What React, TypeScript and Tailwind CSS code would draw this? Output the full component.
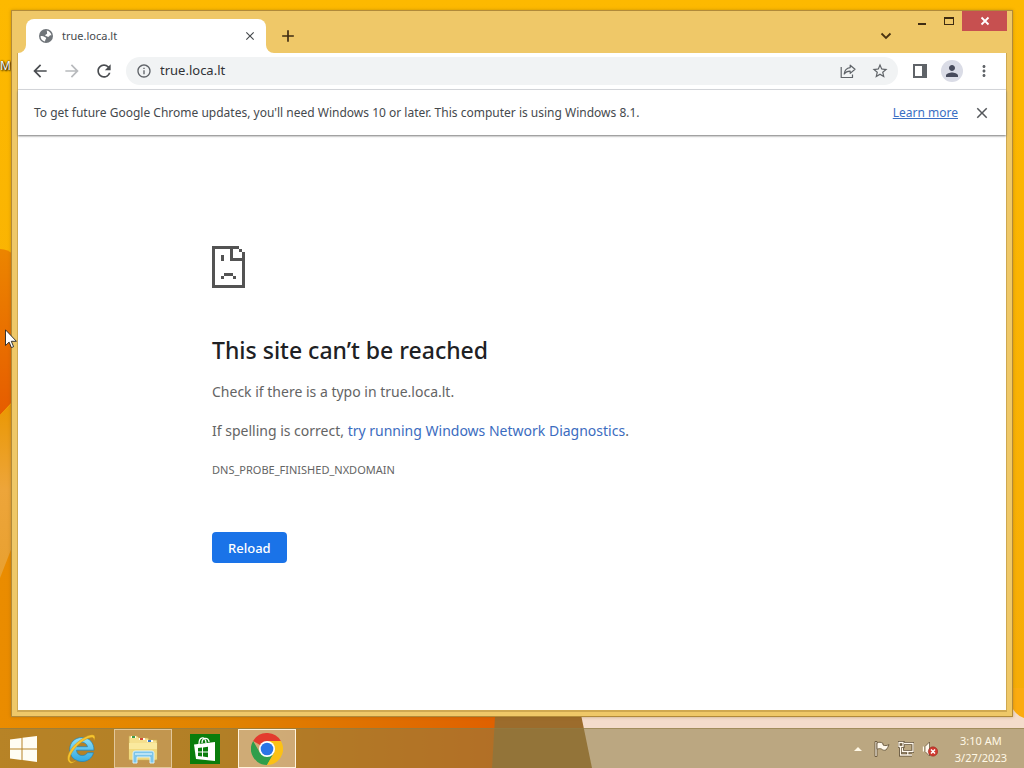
import React from 'react';
import {
  MdAdd,
  MdArrowBack,
  MdArrowForward,
  MdClose,
  MdInfoOutline,
  MdMoreVert,
  MdPerson,
  MdRefresh,
  MdStarOutline,
} from 'react-icons/md';

const Wallpaper: React.FC = () => (
  <svg
    className="absolute inset-0 h-full w-full"
    viewBox="0 0 1024 768"
    preserveAspectRatio="none"
    aria-hidden="true"
  >
    <defs>
      <linearGradient id="sky" x1="0" y1="0" x2="0" y2="1">
        <stop offset="0" stopColor="#fdb900" />
        <stop offset="1" stopColor="#f5ab08" />
      </linearGradient>
      <linearGradient id="petal" x1="0" y1="0" x2="0" y2="1">
        <stop offset="0" stopColor="#ec8500" />
        <stop offset="1" stopColor="#e65c00" />
      </linearGradient>
      <linearGradient id="lower" x1="0" y1="0" x2="0" y2="1">
        <stop offset="0" stopColor="#ea9700" />
        <stop offset="0.5" stopColor="#eda53a" />
        <stop offset="1" stopColor="#e8a030" />
      </linearGradient>
      <linearGradient id="floor" x1="0" y1="0" x2="1" y2="0">
        <stop offset="0" stopColor="#ea8c00" />
        <stop offset="0.45" stopColor="#e08300" />
        <stop offset="0.75" stopColor="#e07000" />
        <stop offset="1" stopColor="#e06000" />
      </linearGradient>
    </defs>
    <rect width="1024" height="768" fill="url(#sky)" />
    <path d="M0 249q8 0 14 6v145L0 415z" fill="url(#petal)" />
    <path d="M0 415l14-14v150L0 578z" fill="url(#lower)" />
    <path d="M0 578l14-36v160h486v66H0z" fill="url(#floor)" />
    <path d="M496 700h83l14 68H492z" fill="#9c6c2c" />
    <path d="M578 700h446v68H592z" fill="#f4dccb" />
    <path d="M1010 688h14v30q-8-2-14-14z" fill="#fbab10" />
  </svg>
);

const GlobeIcon: React.FC = () => (
  <svg className="size-4 shrink-0" viewBox="0 0 16 16" aria-hidden="true">
    <circle cx="8" cy="8" r="7" fill="#70757a" />
    <path
      d="M8.6 2.500C11.200 2.900 13.200 4.900 13.500 7.600c-.9-.5-2-.2-2.300.6-.3.900-1.500.8-2.100.2-.5-.5-1.500-.1-1.700-.9-.2-.9.8-1.200 1.400-1.600.8-.5-.1-1.300.2-2 .1-.4-.3-.9-.4-1.400z"
      fill="#fff"
    />
    <path
      d="M2.500 8.200c1.300-.5 2.900-.3 3.700.6.5.6 1.600.5 1.900 1.200.3.8-.7 1.200-.8 2 0 .5-.3 1-.4 1.400-2.500-.4-4.400-2.600-4.400-5.200z"
      fill="#fff"
    />
  </svg>
);

const TabFoot: React.FC<{ flip?: boolean }> = ({ flip }) => (
  <svg className="size-2 shrink-0" viewBox="0 0 8 8" aria-hidden="true">
    <path d={flip ? 'M0 0a8 8 0 0 0 8 8H0z' : 'M8 0a8 8 0 0 1-8 8h8z'} fill="#fff" />
  </svg>
);

const TitleBar: React.FC = () => (
  <div className="flex h-[42px] items-end">
    <TabFoot />
    <div className="flex h-[34px] w-60 items-center rounded-t-lg bg-white pl-3 pr-2 text-[#45494d]">
      <GlobeIcon />
      <span className="ml-2 flex-1 text-[11px]">true.loca.lt</span>
      <button type="button" aria-label="Close tab" className="flex size-4 items-center justify-center">
        <MdClose className="size-3.5" />
      </button>
    </div>
    <TabFoot flip />
    <button
      type="button"
      aria-label="New tab"
      className="mb-[3px] flex size-7 items-center justify-center text-[#3f2c12]"
    >
      <MdAdd className="size-5" />
    </button>
    <div className="-mr-px ml-auto flex self-start">
      <button
        type="button"
        aria-label="Search tabs"
        className="mr-2 mt-[11px] flex size-7 items-center justify-center"
      >
        <svg className="h-2 w-3" viewBox="0 0 12 8" fill="none" stroke="#4a3310" strokeWidth="1.800">
          <path d="M1.500 1.500L6 6l4.500-4.500" />
        </svg>
      </button>
      <button type="button" aria-label="Minimize" className="flex h-5 w-[27px] items-center justify-center">
        <svg className="size-3" viewBox="0 0 12 12" fill="#3f2c12">
          <path d="M2 8h8v2H2z" />
        </svg>
      </button>
      <button type="button" aria-label="Maximize" className="flex h-5 w-[27px] items-center justify-center">
        <svg className="size-3" viewBox="0 0 12 12" fill="#3f2c12">
          <path fillRule="evenodd" d="M1 2h10v8H1zM2 4v5h8V4z" />
        </svg>
      </button>
      <button
        type="button"
        aria-label="Close"
        className="flex h-5 w-[45px] items-center justify-center bg-[#c75050]"
      >
        <svg className="size-3" viewBox="0 0 12 12" fill="none" stroke="#fff" strokeWidth="1.800">
          <path d="M2.500 2.500l7 7M9.500 2.500l-7 7" />
        </svg>
      </button>
    </div>
  </div>
);

const iconButton = 'flex size-8 shrink-0 items-center justify-center';

const Toolbar: React.FC = () => (
  <div className="flex h-[37px] items-center border-b border-[#dadce0] px-1.5 text-[#5f6368]">
    <button type="button" aria-label="Back" className={iconButton}>
      <MdArrowBack className="size-5 text-[#4a4d51]" />
    </button>
    <button type="button" aria-label="Forward" className={iconButton}>
      <MdArrowForward className="size-5 text-[#b8babd]" />
    </button>
    <button type="button" aria-label="Reload page" className={iconButton}>
      <MdRefresh className="size-5 text-[#4a4d51]" />
    </button>
    <div className="ml-1.5 flex h-7 flex-1 items-center rounded-full bg-[#f1f3f4] pl-2.5 pr-0.5">
      <MdInfoOutline className="size-4 shrink-0" />
      <input
        aria-label="Address"
        defaultValue="true.loca.lt"
        className="ml-2 min-w-0 flex-1 bg-transparent text-[13px] text-[#303236] outline-none"
      />
      <button type="button" aria-label="Share" className={iconButton}>
        <svg
          className="size-4"
          viewBox="0 0 16 16"
          fill="none"
          stroke="currentColor"
          strokeWidth="1.200"
          strokeLinejoin="round"
        >
          <path d="M1.200 4v10.500h11.300v-3" />
          <path d="M10.200 2.200l4.800 4.100-4.800 4.100V8.200C7.600 8.100 5.700 8.900 4.200 11c.3-3.300 2.300-5.900 6-6.400z" />
        </svg>
      </button>
      <button type="button" aria-label="Bookmark" className={iconButton}>
        <MdStarOutline className="size-[18px]" />
      </button>
    </div>
    <button type="button" aria-label="Side panel" className={`ml-1.5 ${iconButton}`}>
      <svg className="size-4" viewBox="0 0 16 16" fill="currentColor">
        <path fillRule="evenodd" d="M1 1h14v14H1zM3 3v10h7V3z" />
      </svg>
    </button>
    <button type="button" aria-label="Profile" className={iconButton}>
      <span className="flex size-[22px] items-center justify-center rounded-full bg-[#dadce6]">
        <MdPerson className="size-[18px] text-[#474b5c]" />
      </span>
    </button>
    <button type="button" aria-label="Menu" className={iconButton}>
      <MdMoreVert className="size-[18px]" />
    </button>
  </div>
);

const InfoBar: React.FC = () => (
  <div className="flex h-[45px] items-center pl-4 pr-2 text-[12px] text-[#45494d] shadow-[0_1px_2px_#777]">
    <p className="flex-1">
      To get future Google Chrome updates, you'll need Windows 10 or later. This computer is using Windows 8.1.
    </p>
    <a href="#learn" className="text-[#3a6fc4] underline">
      Learn more
    </a>
    <button type="button" aria-label="Dismiss" className={`ml-2 ${iconButton}`}>
      <MdClose className="size-[18px] text-[#55585c]" />
    </button>
  </div>
);

const SadPage: React.FC = () => (
  <svg className="h-[42px] w-[33px]" viewBox="0 0 11 14" fill="#535353" shapeRendering="crispEdges">
    <path d="M0 0h9v1H7v3h3V2h1v12H0zM1 1v12h9V5H6V1z" fillRule="evenodd" />
    <path d="M9 1h1v1H9zM3 3h1v2H3zM4 9h3v1H4zM3 10h1v1H3zM7 10h1v1H7z" />
  </svg>
);

const ErrorPage: React.FC = () => (
  <main className="flex-1 px-6 pt-[111px]">
    <div className="mx-auto max-w-[600px] text-[14px] leading-5 text-[#646464]">
      <SadPage />
      <h1 className="mt-12 text-[23px] font-medium leading-7 text-[#202124]">This site can’t be reached</h1>
      <p className="mt-[18px]">Check if there is a typo in true.loca.lt.</p>
      <p className="mt-[19px]">
        If spelling is correct,{' '}
        <a href="#diagnostics" className="text-[#3b6cc0]">
          try running Windows Network Diagnostics
        </a>
        .
      </p>
      <p className="mt-[19px] text-[11px]">DNS_PROBE_FINISHED_NXDOMAIN</p>
      <button
        type="button"
        className="mt-[52px] h-[31px] rounded bg-[#1a73e8] px-4 text-[13px] font-medium text-white"
      >
        Reload
      </button>
    </div>
  </main>
);

const WindowsLogo: React.FC = () => (
  <svg className="h-[26px] w-7" viewBox="0 0 28 26" fill="#fffdf4">
    <path d="M0 3.500L11.500 2v10.500H0zM12.500 1.800L27 0v12.500H12.500zM0 13.500h11.500V24L0 22.500zM12.500 13.500H27V26l-14.500-1.900z" />
  </svg>
);

const ExplorerE: React.FC = () => (
  <svg className="size-8" viewBox="0 0 32 32">
    <defs>
      <linearGradient id="ie" x1="0" y1="0" x2="0" y2="1">
        <stop offset="0" stopColor="#8fe0fa" />
        <stop offset="1" stopColor="#31a8e0" />
      </linearGradient>
    </defs>
    <path
      d="M17 4.500c7.500 0 12 5.300 12 12.700H11.500c.3 3.300 2.600 5.300 5.800 5.300 2.400 0 4-1 5.200-2.800h6C27 25.200 22.800 28.500 17 28.500c-7.200 0-12.300-5-12.300-12S9.800 4.500 17 4.500zm-5.200 9.200h10.700c-.6-2.700-2.600-4.300-5.300-4.300s-4.700 1.600-5.400 4.300z"
      fill="url(#ie)"
      stroke="#2383b5"
      strokeWidth=".7"
      fillRule="evenodd"
    />
    <path
      d="M5 30c-6-4 0-15 8.500-21.500C20 3.200 27.500 0 29.500 2.800c.9 1.300.4 3.200-.5 5 .1-2-.4-3.200-1.900-3.300-3-.2-7.300 2-12.200 6C8 16.200 2.500 25.500 5.600 28.200c1.300 1.100 3.800.2 6-1C8.800 29.600 6.700 30.900 5 30z"
      fill="#f7c52e"
      stroke="#b98518"
      strokeWidth=".4"
    />
  </svg>
);

const FolderIcon: React.FC = () => (
  <svg className="size-8" viewBox="0 0 32 32">
    <path d="M2 3h8l2 2h9l1 2h8v20H2z" fill="#f5df8d" stroke="#c8aa50" strokeWidth=".7" />
    <path d="M4 3h5v2H4zM12 5h6v2h-6zM20 7h6v2h-6z" fill="#fffdf0" />
    <path d="M5 3h3v2H5z" fill="#3d9b46" />
    <path d="M13 5h3v2h-3z" fill="#d44c36" />
    <path d="M21 7h3v2h-3z" fill="#3d79bf" />
    <path d="M2 10h28v16H2z" fill="#fae99e" />
    <path d="M2 16h28v10H2z" fill="#f1d97d" />
    <path
      d="M6 20q0-2 2-2h17q2 0 2 2v10h-4v-6H10v6H6z"
      fill="#7cc5ea"
      stroke="#d5f0fb"
      strokeWidth="1"
    />
    <path d="M8 20h17v2H8z" fill="#b9e3f6" />
  </svg>
);

const StoreIcon: React.FC = () => (
  <svg className="size-[30px]" viewBox="0 0 30 30">
    <path d="M0 0h30v30H0z" fill="#0a7d0c" />
    <path d="M9 10C9 2 16 2 16 9M12 9c0-6 7-6 7-1" fill="none" stroke="#fff" strokeWidth="1.300" />
    <path d="M4 10.500L25 8v19L6 25z" fill="#fff" />
    <path d="M8 14l4-.5v4H8zM13 13.400l5-.6v4.700h-5zM8 18.500h4v4L8 22zM13 18.500h5v4.700l-5-.6z" fill="#0a7d0c" />
  </svg>
);

const ChromeIcon: React.FC = () => (
  <svg className="size-8" viewBox="0 0 48 48">
    <path d="M24 24L3.200 12A24 24 0 0 1 44.800 12H24z" fill="#e33b2e" />
    <path d="M24 24l10.400 6L24 48A24 24 0 0 1 3.200 12l10.400 18z" fill="#2f9e4b" />
    <path d="M24 12h20.800A24 24 0 0 1 24 48l10.400-18z" fill="#fbc116" />
    <circle cx="24" cy="24" r="12" fill="#fff" />
    <circle cx="24" cy="24" r="9.500" fill="#2a75e6" />
  </svg>
);

const taskButton = 'flex w-[58px] items-center justify-center border';

const Taskbar: React.FC = () => (
  <footer className="relative flex h-10 items-stretch border-t border-[#8f7b45]/60 bg-[#8c7c46]/55">
    <button type="button" aria-label="Start" className="flex w-12 items-center justify-center">
      <WindowsLogo />
    </button>
    <nav className="ml-1 flex gap-1">
      <button type="button" aria-label="Internet Explorer" className={`${taskButton} border-transparent`}>
        <ExplorerE />
      </button>
      <button
        type="button"
        aria-label="File Explorer"
        className={`${taskButton} border-[#e2c79a] bg-[#d2ac78]/50`}
      >
        <FolderIcon />
      </button>
      <button type="button" aria-label="Store" className={`${taskButton} border-transparent`}>
        <StoreIcon />
      </button>
      <button
        type="button"
        aria-label="Google Chrome"
        className={`${taskButton} border-[#fff3dc] bg-[#dcbf98]/70`}
      >
        <ChromeIcon />
      </button>
    </nav>
    <div className="ml-auto flex items-center pr-[17px] text-[#fff8e6]">
      <button type="button" aria-label="Show hidden icons" className="flex size-6 items-center justify-center">
        <svg className="h-1 w-2" viewBox="0 0 8 4" fill="currentColor">
          <path d="M0 4l4-4 4 4z" />
        </svg>
      </button>
      <button type="button" aria-label="Action Center" className="flex size-6 items-center justify-center">
        <svg className="size-4" viewBox="0 0 16 16" fill="#fff8ec" stroke="#5b4a30" strokeWidth=".8">
          <path d="M1 .5h2v15H1z" />
          <path d="M3 2c2-1.200 4-1 6 .5V4c2 1 4 .6 6-.4-1 2-1.500 4-3 5.400-2 .6-3.500 0-4.500-1-1.500-.6-3-.4-4.500.2z" />
        </svg>
      </button>
      <button type="button" aria-label="Network" className="flex size-6 items-center justify-center">
        <svg className="size-4" viewBox="0 0 16 16" fill="none">
          <path d="M6 2.500h9v8H4.500V7M9.800 10.500v3M6 14h8M2.500 6v8H6" stroke="#5b4a30" strokeWidth="3" />
          <path d="M1 1.500h4v4H1z" fill="#8a7650" stroke="#5b4a30" strokeWidth="3" />
          <path d="M6 2.500h9v8H4.500V7M9.800 10.500v3M6 14h8M2.500 6v8H6" stroke="#fff8ec" strokeWidth="1.300" />
          <path d="M1 1.500h4v4H1z" stroke="#fff8ec" strokeWidth="1.300" />
        </svg>
      </button>
      <button type="button" aria-label="Volume muted" className="flex size-6 items-center justify-center">
        <svg className="size-4" viewBox="0 0 16 16">
          <path d="M3 5.500L7.500 1v14L3 10.500z" fill="#fff8ec" stroke="#5b4a30" strokeWidth=".7" />
          <path d="M1.500 5.500v5" stroke="#fff8ec" strokeWidth="1.300" />
          <circle cx="11" cy="10.500" r="4.700" fill="#cf3a30" stroke="#8e241d" strokeWidth=".5" />
          <path d="M9 8.500l4 4M13 8.500l-4 4" stroke="#fff" strokeWidth="1.500" />
        </svg>
      </button>
      <time className="ml-[13px] text-center text-[11px] leading-[17px]">
        3:10 AM
        <br />
        3/27/2023
      </time>
    </div>
  </footer>
);

const Pointer: React.FC = () => (
  <svg className="absolute left-[5px] top-[329px] h-5 w-3" viewBox="0 0 12 20" aria-hidden="true">
    <path
      d="M.5.800v15.700l3.600-3.400 2.300 5.500 2.200-.9-2.300-5.400h5.100z"
      fill="#fff"
      stroke="#222"
      strokeWidth=".9"
    />
  </svg>
);

const App: React.FC = () => {
  return (
    <div className="relative flex min-h-screen flex-col overflow-hidden font-['Noto_Sans','Open_Sans',sans-serif]">
      <Wallpaper />
      <span className="absolute left-0 top-[58px] text-[12px] leading-4 text-white [text-shadow:1px_1px_2px_#000,0_0_2px_#000]">
        M
      </span>
      <div className="relative flex flex-1 flex-col px-[11px] pb-[11px] pt-2.5">
        <div className="flex flex-1 flex-col border border-[#b18a3a] bg-[#efc868] px-1.5 pb-1.5 shadow-[0_0_3px_#7a5a1066]">
          <TitleBar />
          <div className="flex flex-1 flex-col bg-white shadow-[0_1px_0_1px_#cfa850]">
            <Toolbar />
            <InfoBar />
            <ErrorPage />
          </div>
        </div>
      </div>
      <Taskbar />
      <Pointer />
    </div>
  );
};

export default App;
